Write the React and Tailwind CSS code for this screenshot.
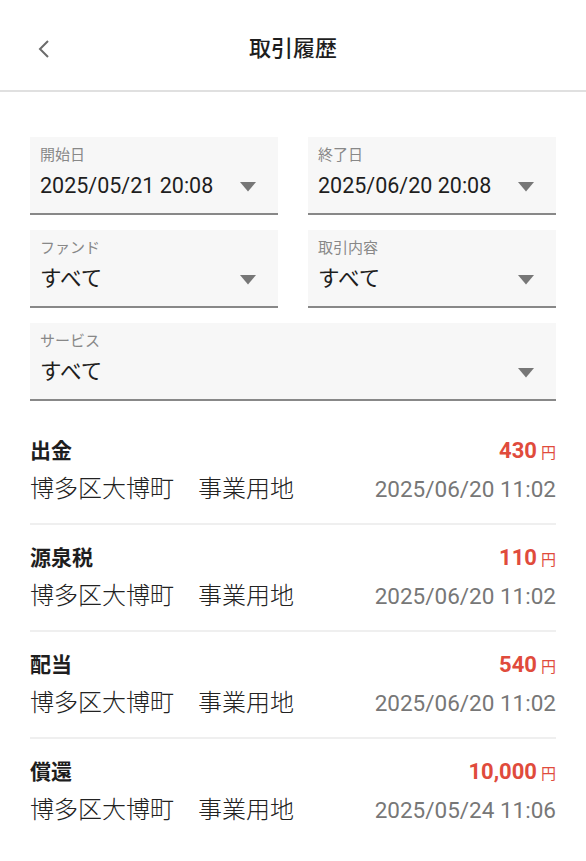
const FONT = { fontFamily: 'Roboto, "Noto Sans CJK JP", sans-serif' };

const filters = [
  { label: "開始日", value: "2025/05/21 20:08" },
  { label: "終了日", value: "2025/06/20 20:08" },
  { label: "ファンド", value: "すべて" },
  { label: "取引内容", value: "すべて" },
  { label: "サービス", value: "すべて", wide: true },
];

const history = [
  { type: "出金", amount: "430", date: "2025/06/20 11:02" },
  { type: "源泉税", amount: "110", date: "2025/06/20 11:02" },
  { type: "配当", amount: "540", date: "2025/06/20 11:02" },
  { type: "償還", amount: "10,000", date: "2025/05/24 11:06" },
];

function Caret() {
  return (
    <svg width="18" height="11" viewBox="0 0 18 11" className="shrink-0">
      <path d="M1 1 H17 L9 10.5 Z" fill="#777" />
    </svg>
  );
}

function FilterBox({ label, value, wide }) {
  return (
    <div
      className={`flex h-[78px] flex-col border-b-2 border-[#888] bg-[#f7f7f7] pl-[10px] pr-[21px] ${
        wide ? "col-span-2" : ""
      }`}
    >
      <div className="mt-[7px] text-[15px] leading-[22px] text-[#888]">{label}</div>
      <div className="mt-[6px] flex items-center justify-between">
        <span className="text-[21.5px] leading-[28px] text-[#1e1e1e]">{value}</span>
        <Caret />
      </div>
    </div>
  );
}

function HistoryRow({ item, last }) {
  return (
    <div className={`py-[19px] ${last ? "" : "border-b-2 border-[#efefef]"}`}>
      <div className="flex items-baseline justify-between leading-[28px]">
        <span className="text-[21px] font-bold text-[#1e1e1e]">{item.type}</span>
        <span className="text-[#e04b3c]">
          <span className="text-[22px] font-bold">{item.amount}</span>
          <span className="ml-[4px] text-[15px]">円</span>
        </span>
      </div>
      <div className="mt-[7px] flex items-baseline justify-between leading-[30px]">
        <span className="text-[24px] font-light text-[#222]">博多区大博町　事業用地</span>
        <span className="text-[22.5px] text-[#777]">{item.date}</span>
      </div>
    </div>
  );
}

export default function App() {
  return (
    <div className="min-h-screen w-full bg-white" style={FONT}>
      <div className="relative flex h-[92px] items-center justify-center border-b-2 border-[#e0e0e0]">
        <button type="button" className="absolute left-[36px] top-[39px]">
          <svg width="16" height="20" viewBox="0 0 16 20">
            <path d="M12 2 L4 10 L12 18" fill="none" stroke="#6b6b6b" strokeWidth="2" />
          </svg>
        </button>
        <h1 className="mt-[6px] text-[22px] font-medium text-[#1e1e1e]">取引履歴</h1>
      </div>

      <div className="grid grid-cols-2 gap-x-[30px] gap-y-[15px] px-[30px] pt-[45px]">
        {filters.map((f) => (
          <FilterBox key={f.label} {...f} />
        ))}
      </div>

      <div className="mt-[17px] px-[30px]">
        {history.map((item, i) => (
          <HistoryRow key={item.type} item={item} last={i === history.length - 1} />
        ))}
      </div>
    </div>
  );
}
